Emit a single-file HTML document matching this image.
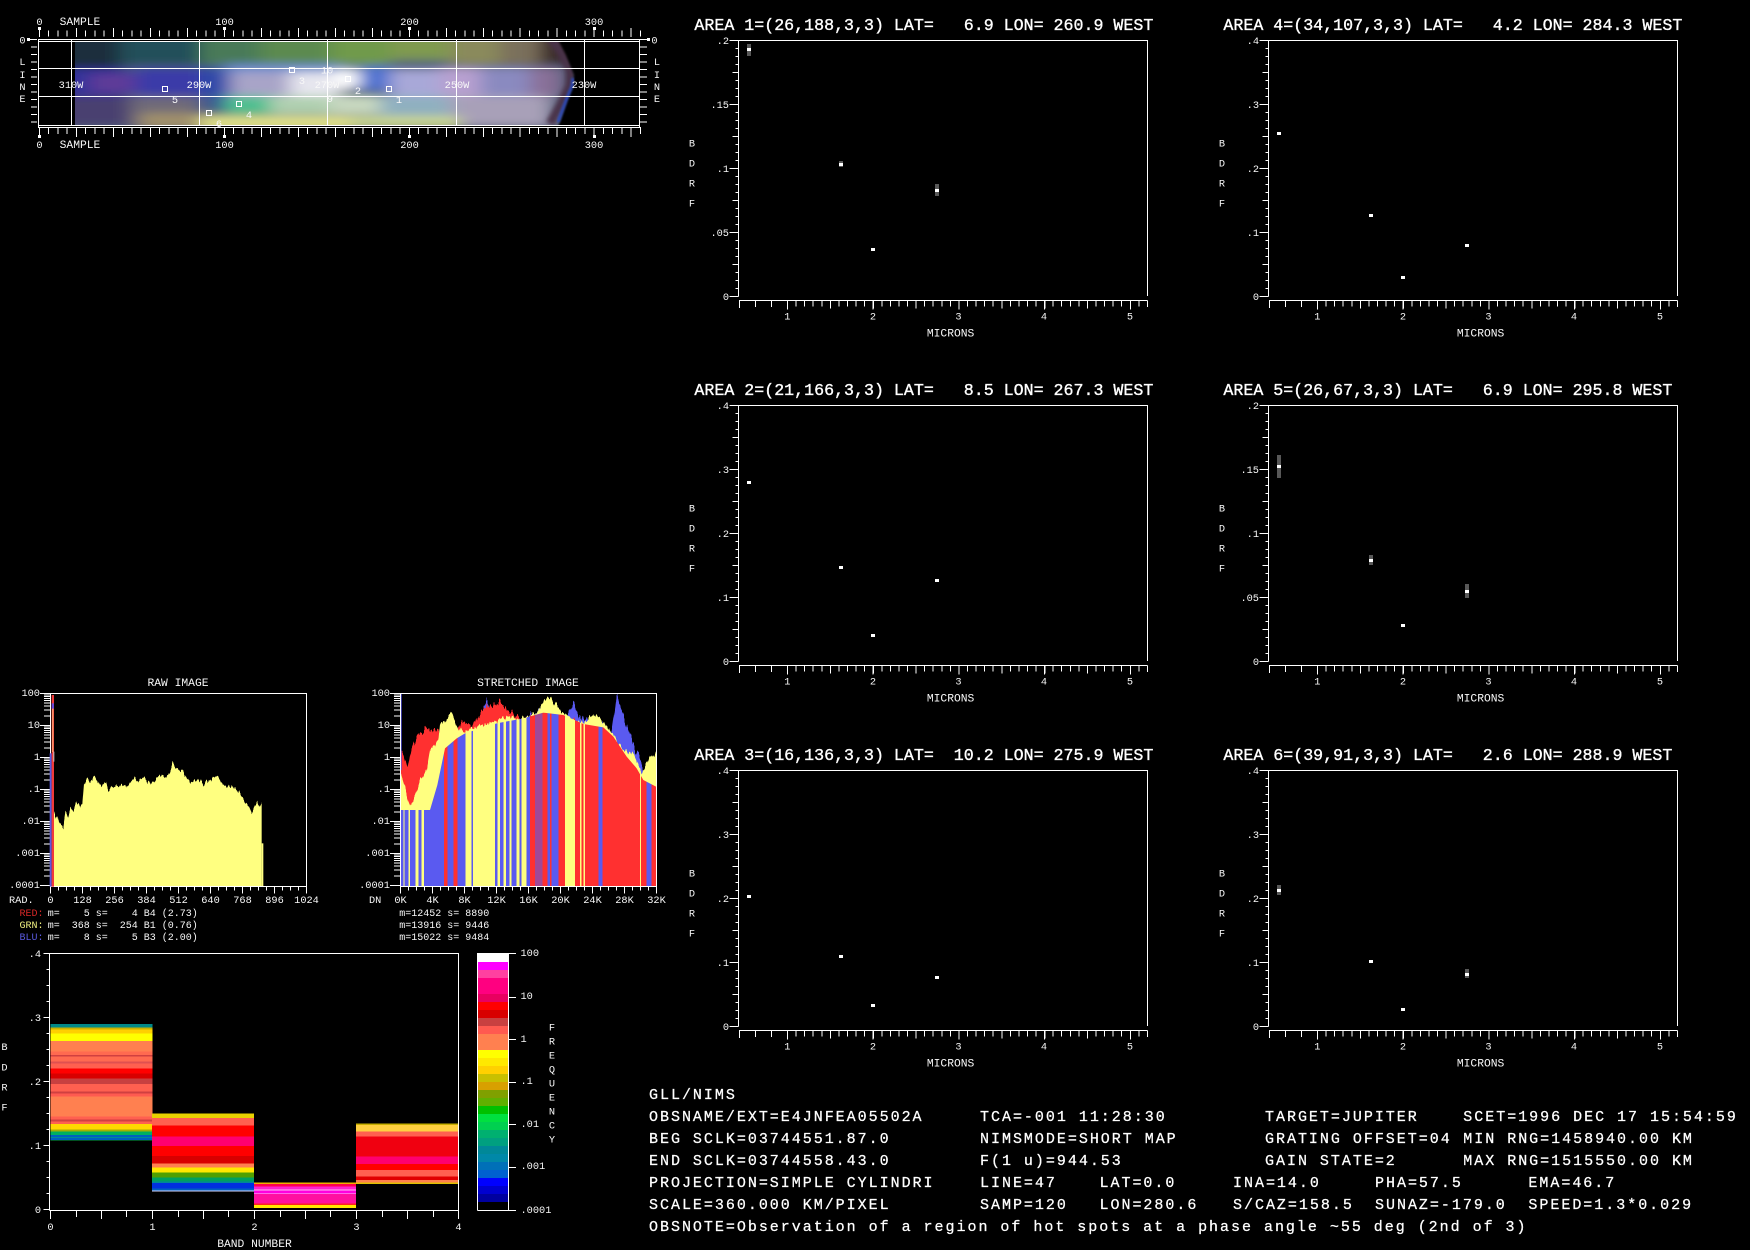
<!DOCTYPE html>
<html><head><meta charset="utf-8"><title>GLL/NIMS</title>
<style>
html,body{margin:0;padding:0;background:#000;width:1750px;height:1250px;overflow:hidden}
svg{display:block}
text{font-family:"Liberation Mono",monospace;fill:#f8f8f8;white-space:pre;transform:translateY(-1px)}
.s{font-size:11.3px}
.t{font-size:10.3px}
.l{font-size:10px}
.h{font-size:16.64px;fill:#fff;stroke:#fff;stroke-width:.35px}
.b{font-size:15px;letter-spacing:1.98px;fill:#fff;stroke:#fff;stroke-width:.25px}
.m{text-anchor:middle}
.e{text-anchor:end}
.w{fill:none;stroke:#fff;stroke-width:1}
.g{fill:#585858}
.p{fill:#fff}
</style></head><body>
<svg xmlns="http://www.w3.org/2000/svg" width="1750" height="1250" viewBox="0 0 1750 1250">
<defs>
<filter id="bl" x="-10%" y="-30%" width="120%" height="160%"><feGaussianBlur stdDeviation="9 4.5"/></filter>
<filter id="bs"><feGaussianBlur stdDeviation="1"/></filter>
<filter id="bm" x="-30%" y="-30%" width="160%" height="160%"><feGaussianBlur stdDeviation="2.5"/></filter>
<filter id="jag" x="-5%" y="-10%" width="110%" height="120%" color-interpolation-filters="sRGB">
<feTurbulence type="fractalNoise" baseFrequency="0.13 0.0005" numOctaves="2" seed="3" result="n"/>
<feColorMatrix in="n" type="matrix" values="0 0 0 0 .5  0 1 0 0 0  0 0 0 0 0  0 0 0 0 1" result="c"/>
<feDisplacementMap in="SourceGraphic" in2="c" scale="60" xChannelSelector="R" yChannelSelector="G"/>
</filter>
<filter id="jag2" x="-5%" y="-10%" width="110%" height="120%" color-interpolation-filters="sRGB">
<feTurbulence type="fractalNoise" baseFrequency="0.13 0.0005" numOctaves="2" seed="8" result="n"/>
<feColorMatrix in="n" type="matrix" values="0 0 0 0 .5  0 1 0 0 0  0 0 0 0 0  0 0 0 0 1" result="c"/>
<feDisplacementMap in="SourceGraphic" in2="c" scale="35" xChannelSelector="R" yChannelSelector="G"/>
</filter>
<clipPath id="imgc"><rect x="75" y="41" width="564" height="84"/></clipPath>
<clipPath id="hbox"><rect x="150" y="72" width="768" height="576"/></clipPath>
<g id="pax" shape-rendering="crispEdges">
<path class="w" d="M738.5 296.5V40.5H1147.5V296"/>
<path class="w" d="M739 300.5H1147.5"/>
<line x1="737" y1="40" x2="737" y2="297" stroke="#fff" stroke-width="3" stroke-dasharray="1 7"/>
<line x1="735.5" y1="40" x2="735.5" y2="297" stroke="#fff" stroke-width="6" stroke-dasharray="1 31"/>
<line x1="734" y1="40" x2="734" y2="297" stroke="#fff" stroke-width="9" stroke-dasharray="1 63"/>
<line x1="787" y1="303.5" x2="1148" y2="303.5" stroke="#fff" stroke-width="6" stroke-dasharray="1 7.57"/>
<line x1="787" y1="305" x2="1148" y2="305" stroke="#fff" stroke-width="9" stroke-dasharray="1 84.7"/>
<line x1="830" y1="304.5" x2="1148" y2="304.5" stroke="#fff" stroke-width="8" stroke-dasharray="1 41.85"/>
<path class="w" d="M739.5 301V308M755.5 301V307M771.5 301V307M1147.5 301V307"/>
</g>
<path id="dec" d="M40 0H50M44 -9.6H50M44 -15.3H50M44 -19.3H50M44 -22.4H50M44 -24.9H50M44 -27H50M44 -28.9H50M44 -30.5H50" class="w"/>
<g id="hax" shape-rendering="crispEdges">
<path class="w" d="M50.5 886.5V693.5H306.5V886.5H50.5"/>
<path class="w" d="M40 693.5H50"/>
<use href="#dec" x="0" y="725.5"/><use href="#dec" x="0" y="757.5"/>
<use href="#dec" x="0" y="789.5"/><use href="#dec" x="0" y="821.5"/><use href="#dec" x="0" y="853.5"/><use href="#dec" x="0" y="885.5"/>
<line x1="50" y1="888.5" x2="307" y2="888.5" stroke="#fff" stroke-width="4" stroke-dasharray="1 7"/>
<line x1="50" y1="890" x2="307" y2="890" stroke="#fff" stroke-width="7" stroke-dasharray="1 31"/>
</g>
<clipPath id="floor"><polygon points="150,420 240,420 262,345 285,235 320,205 345,190 400,172 440,160 520,145 580,128 640,135 700,162 760,172 790,200 830,260 860,295 880,330 918,350 918,650 150,650"/></clipPath>
</defs>
<rect width="1750" height="1250" fill="#000"/>

<!-- Top image -->
<g clip-path="url(#imgc)">
<g filter="url(#bl)">
<rect x="40" y="20" width="540" height="120" fill="#50607a"/>
<rect x="40" y="25" width="83" height="43" fill="#1b2d3c"/>
<rect x="120" y="25" width="80" height="40" fill="#24505a"/>
<rect x="200" y="25" width="60" height="40" fill="#4a7a58"/>
<rect x="260" y="25" width="70" height="40" fill="#5c8a50"/>
<rect x="330" y="25" width="60" height="40" fill="#6f9a4c"/>
<rect x="390" y="25" width="60" height="35" fill="#7f9a50"/>
<rect x="450" y="25" width="50" height="40" fill="#8a8a5c"/>
<rect x="500" y="25" width="40" height="40" fill="#7a6f5c"/>
<rect x="540" y="25" width="40" height="40" fill="#3a2c2c"/>
<rect x="40" y="68" width="88" height="28" fill="#33309a"/>
<rect x="90" y="74" width="45" height="18" fill="#5e3a98"/>
<rect x="135" y="68" width="65" height="28" fill="#3a3aa8"/>
<rect x="200" y="68" width="30" height="28" fill="#2f4aa8"/>
<rect x="225" y="64" width="120" height="8" fill="#6a8ad0"/>
<rect x="230" y="72" width="60" height="24" fill="#a8a4c8"/>
<rect x="290" y="72" width="50" height="24" fill="#e6e6ee"/>
<rect x="335" y="70" width="24" height="18" fill="#ffffff"/>
<rect x="360" y="66" width="30" height="24" fill="#4a6fd0"/>
<rect x="390" y="70" width="50" height="26" fill="#a8a8d8"/>
<rect x="440" y="68" width="40" height="28" fill="#b8a0d0"/>
<rect x="480" y="68" width="50" height="28" fill="#8a8ac0"/>
<rect x="530" y="68" width="30" height="28" fill="#8a7098"/>
<rect x="40" y="96" width="90" height="30" fill="#4a3f70"/>
<rect x="130" y="96" width="70" height="30" fill="#6f6a78"/>
<rect x="200" y="96" width="25" height="14" fill="#3a5a90"/>
<rect x="225" y="96" width="45" height="18" fill="#50c090"/>
<rect x="270" y="96" width="60" height="18" fill="#b0d0b0"/>
<rect x="330" y="96" width="50" height="18" fill="#c8d8c0"/>
<rect x="380" y="96" width="70" height="30" fill="#8fb0c0"/>
<rect x="450" y="96" width="100" height="30" fill="#a8a0b8"/>
<rect x="140" y="113" width="60" height="16" fill="#a0906a"/>
<rect x="200" y="116" width="150" height="14" fill="#e0e088"/>
<rect x="350" y="116" width="110" height="12" fill="#c8d490"/>
</g>
<path d="M545 30L560 50L570 70L570 85L562 102L550 124" fill="none" stroke="#4a3048" stroke-width="9" filter="url(#bm)"/>
<path d="M553 30L566 55L574 75L573 85L568 97L557 130H640V30Z" fill="#000" filter="url(#bs)"/>
<path d="M573 78L572 86L567 98L558 122" fill="none" stroke="#2a4ab8" stroke-width="3" filter="url(#bs)"/>
</g>

<g shape-rendering="crispEdges">
<path class="w" d="M38.5 39.5H639.5V127.5H38.5Z"/>
<path class="w" d="M38.5 41.5H639.5M38.5 125.5H639.5"/>
<path class="w" d="M71.5 40V126M199.5 40V126M327.5 40V126M456.5 40V126M584.5 40V126M39 68.5H639M39 96.5H639"/>
<line x1="39" y1="33.5" x2="641" y2="33.5" stroke="#fff" stroke-width="6" stroke-dasharray="1 8.245"/>
<line x1="39" y1="32.5" x2="641" y2="32.5" stroke="#fff" stroke-width="9" stroke-dasharray="1 35.98"/>
<line x1="39" y1="130.5" x2="641" y2="130.5" stroke="#fff" stroke-width="7" stroke-dasharray="1 8.245"/>
<line x1="39" y1="132" x2="641" y2="132" stroke="#fff" stroke-width="10" stroke-dasharray="1 35.98"/>
<line x1="34" y1="39" x2="34" y2="126" stroke="#fff" stroke-width="6" stroke-dasharray="1 6.5"/>
<line x1="643.5" y1="39" x2="643.5" y2="126" stroke="#fff" stroke-width="7" stroke-dasharray="1 6.5"/>
<path fill="#fff" d="M38 27h3v3h-3zM223 27h3v3h-3zM408 27h3v3h-3zM593 27h3v3h-3zM38 135h3v3h-3zM223 135h3v3h-3zM408 135h3v3h-3zM593 135h3v3h-3zM27 38h3v3h-3zM647 38h3v3h-3z"/>
<path class="w" d="M30 39.5H37M640 39.5H647"/>
<path class="w" d="M386.5 86.5h5v5h-5zM345.5 76.5h5v5h-5zM289.5 67.5h5v5h-5zM236.5 101.5h5v5h-5zM162.5 86.5h5v5h-5zM206.5 110.5h5v5h-5z"/>
</g>

<text class="t m" x="39.5" y="26">0</text><text class="s m" x="80" y="26">SAMPLE</text>
<text class="t m" x="224.5" y="26">100</text><text class="t m" x="409.5" y="26">200</text><text class="t m" x="594" y="26">300</text>
<text class="t m" x="39.5" y="149">0</text><text class="s m" x="80" y="149">SAMPLE</text>
<text class="t m" x="224.5" y="149">100</text><text class="t m" x="409.5" y="149">200</text><text class="t m" x="594" y="149">300</text>
<text class="t m" x="22.5" y="44.5">0</text><text class="t m" x="22.5" y="66">L</text><text class="t m" x="22.5" y="79">I</text><text class="t m" x="22.5" y="91">N</text><text class="t m" x="22.5" y="103">E</text>
<text class="t m" x="654.5" y="44.5">0</text><text class="t m" x="657" y="66">L</text><text class="t m" x="657" y="79">I</text><text class="t m" x="657" y="91">N</text><text class="t m" x="657" y="103">E</text>
<text class="t m" x="71" y="89">310W</text><text class="t m" x="199" y="89">290W</text><text class="t m" x="327" y="89">270W</text><text class="t m" x="457" y="89">250W</text><text class="t m" x="584" y="89">230W</text>
<text class="t m" x="327" y="74.5">10</text><text class="t m" x="175" y="104">5</text><text class="t m" x="249" y="119">4</text><text class="t m" x="219" y="128">6</text><text class="t m" x="302" y="85">3</text><text class="t m" x="358" y="95">2</text><text class="t m" x="399" y="104">1</text><text class="t m" x="330" y="103">9</text>

<!-- Raw histogram -->
<use href="#hax"/>
<g transform="translate(0,670) scale(.33333)">
<g clip-path="url(#hbox)">
<path filter="url(#jag2)" fill="#ffff80" d="M160 700V430L165 428V450L172 428L178 460L185 465L190 472L197 425L205 440L212 415L220 420L230 395L240 408L247 402L252 342L262 325L270 335L285 315L298 345L305 350L318 335L325 358L335 350L347 345L360 352L372 342L385 352L402 320L415 335L432 320L445 335L452 345L465 330L480 318L495 325L505 315L518 283L530 295L545 300L558 320L572 340L590 325L602 338L618 342L640 322L655 322L668 345L690 350L705 355L730 385L745 405L755 428L772 392L778 412L785 398V700Z"/>
<rect x="785" y="520" width="5" height="130" fill="#ffff80"/>
</g>
<rect x="149" y="250" width="6" height="400" fill="#5a5ae0"/>
<rect x="155" y="75" width="7" height="575" fill="#f03a3a"/>
<rect x="155" y="100" width="7" height="16" fill="#6a4ad8"/>
<rect x="157" y="116" width="3" height="130" fill="#ffc080"/>
<rect x="160" y="245" width="3" height="30" fill="#c8c8c8"/>
</g>
<text class="s m" x="178" y="687">RAW IMAGE</text>
<text class="t e" x="40" y="697">100</text><text class="t e" x="40" y="729">10</text><text class="t e" x="40" y="761">1</text><text class="t e" x="40" y="793">.1</text><text class="t e" x="40" y="825">.01</text><text class="t e" x="40" y="857">.001</text><text class="t e" x="40" y="889">.0001</text>
<text class="t" x="9" y="904">RAD.</text>
<text class="t m" x="50.5" y="904">0</text><text class="t m" x="82.5" y="904">128</text><text class="t m" x="114.5" y="904">256</text><text class="t m" x="146.5" y="904">384</text><text class="t m" x="178.5" y="904">512</text><text class="t m" x="210.5" y="904">640</text><text class="t m" x="242.5" y="904">768</text><text class="t m" x="274.5" y="904">896</text><text class="t m" x="306.5" y="904">1024</text>
<text class="l" x="19.5" y="917" style="fill:#d82828">RED:</text><text class="l" x="47.7" y="917">m=    5 s=    4 B4 (2.73)</text>
<text class="l" x="19.5" y="929" style="fill:#f0f080">GRN:</text><text class="l" x="47.7" y="929">m=  368 s=  254 B1 (0.76)</text>
<text class="l" x="19.5" y="941" style="fill:#5a5ae0">BLU:</text><text class="l" x="47.7" y="941">m=    8 s=    5 B3 (2.00)</text>

<!-- Stretched histogram -->
<g transform="translate(350,670) scale(.33333)">
<g clip-path="url(#hbox)">
<polygon filter="url(#jag)" fill="#5a5af0" points="150,700 150,300 165,400 200,400 240,385 262,345 280,240 320,190 345,185 380,165 410,95 430,130 470,140 510,160 540,140 580,115 620,125 650,140 670,100 685,140 720,150 760,170 785,185 800,78 825,150 850,220 880,290 905,330 918,400 930,700"/>
<polygon filter="url(#jag)" fill="#ff3030" points="150,700 150,240 160,255 172,300 185,235 205,195 225,180 245,175 265,180 285,230 300,210 320,180 345,155 370,165 395,125 420,105 450,100 480,125 510,145 540,150 580,130 600,125 640,145 670,155 700,170 740,170 770,190 800,230 830,270 860,295 880,330 930,350 930,700"/>
<polygon filter="url(#jag2)" fill="#ffff80" points="150,700 150,300 165,350 180,410 195,380 210,330 230,300 240,240 265,210 270,160 285,155 305,125 320,170 345,185 380,170 400,165 430,155 470,140 510,150 530,140 560,130 590,78 610,95 640,130 670,150 700,160 735,130 760,155 790,195 820,240 850,250 875,310 900,260 930,245 930,700"/>
<polygon filter="url(#jag2)" fill="#ff3030" points="840,700 840,280 870,330 930,420 930,700"/>
<g clip-path="url(#floor)" shape-rendering="crispEdges">
<rect x="150" y="70" width="10" height="580" fill="#5a5af0"/><rect x="160" y="70" width="3" height="580" fill="#ffff80"/><rect x="163" y="70" width="12" height="580" fill="#5a5af0"/><rect x="175" y="70" width="5" height="580" fill="#ffff80"/><rect x="180" y="70" width="17" height="580" fill="#5a5af0"/><rect x="197" y="70" width="8" height="580" fill="#ffff80"/><rect x="205" y="70" width="10" height="580" fill="#5a5af0"/><rect x="215" y="70" width="7" height="580" fill="#ffff80"/><rect x="222" y="70" width="60" height="580" fill="#5a5af0"/><rect x="282" y="70" width="10" height="580" fill="#ff3030"/><rect x="292" y="70" width="18" height="580" fill="#5a5af0"/><rect x="310" y="70" width="12" height="580" fill="#ff3030"/><rect x="322" y="70" width="25" height="580" fill="#5a5af0"/><rect x="347" y="70" width="18" height="580" fill="#ffff80"/><rect x="365" y="70" width="4" height="580" fill="#5a5af0"/><rect x="369" y="70" width="66" height="580" fill="#ffff80"/><rect x="435" y="70" width="8" height="580" fill="#5a5af0"/><rect x="443" y="70" width="7" height="580" fill="#ffff80"/><rect x="450" y="70" width="10" height="580" fill="#5a5af0"/><rect x="460" y="70" width="8" height="580" fill="#ffff80"/><rect x="468" y="70" width="10" height="580" fill="#5a5af0"/><rect x="478" y="70" width="7" height="580" fill="#ffff80"/><rect x="485" y="70" width="15" height="580" fill="#5a5af0"/><rect x="500" y="70" width="8" height="580" fill="#ffff80"/><rect x="508" y="70" width="7" height="580" fill="#5a5af0"/><rect x="515" y="70" width="15" height="580" fill="#ffff80"/><rect x="530" y="70" width="10" height="580" fill="#5a5af0"/><rect x="540" y="70" width="15" height="580" fill="#ff3030"/><rect x="555" y="70" width="23" height="580" fill="#a04898"/><rect x="578" y="70" width="14" height="580" fill="#ff3030"/><rect x="592" y="70" width="8" height="580" fill="#5a5af0"/><rect x="600" y="70" width="5" height="580" fill="#ff3030"/><rect x="605" y="70" width="20" height="580" fill="#5a5af0"/><rect x="625" y="70" width="20" height="580" fill="#ff3030"/><rect x="645" y="70" width="30" height="580" fill="#ffff80"/><rect x="675" y="70" width="15" height="580" fill="#ff3030"/><rect x="690" y="70" width="5" height="580" fill="#ffff80"/><rect x="695" y="70" width="5" height="580" fill="#ff3030"/><rect x="700" y="70" width="5" height="580" fill="#ffff80"/><rect x="705" y="70" width="40" height="580" fill="#ff3030"/><rect x="745" y="70" width="12" height="580" fill="#5a5af0"/><rect x="757" y="70" width="113" height="580" fill="#ff3030"/><rect x="870" y="70" width="3" height="580" fill="#ffff80"/><rect x="873" y="70" width="17" height="580" fill="#ff3030"/><rect x="890" y="70" width="15" height="580" fill="#5a5af0"/><rect x="905" y="70" width="13" height="580" fill="#ff3030"/>
</g>
</g>
<rect x="150" y="70" width="5" height="230" fill="#5a5af0"/>
</g>
<use href="#hax" x="350"/>
<text class="s m" x="528" y="687">STRETCHED IMAGE</text>
<text class="t e" x="390" y="697">100</text><text class="t e" x="390" y="729">10</text><text class="t e" x="390" y="761">1</text><text class="t e" x="390" y="793">.1</text><text class="t e" x="390" y="825">.01</text><text class="t e" x="390" y="857">.001</text><text class="t e" x="390" y="889">.0001</text>
<text class="t" x="369" y="904">DN</text>
<text class="t m" x="400.5" y="904">0K</text><text class="t m" x="432.5" y="904">4K</text><text class="t m" x="464.5" y="904">8K</text><text class="t m" x="496.5" y="904">12K</text><text class="t m" x="528.5" y="904">16K</text><text class="t m" x="560.5" y="904">20K</text><text class="t m" x="592.5" y="904">24K</text><text class="t m" x="624.5" y="904">28K</text><text class="t m" x="656.5" y="904">32K</text>
<text class="l" x="399.3" y="917">m=12452 s= 8890</text>
<text class="l" x="399.3" y="929">m=13916 s= 9446</text>
<text class="l" x="399.3" y="941">m=15022 s= 9484</text>

<!-- Band chart -->
<g shape-rendering="crispEdges">
<g transform="translate(0,940) scale(1,.33333)">
<g transform="translate(50.5,0)">
<rect y="252" width="102" height="10" fill="#008888"/><rect y="262" width="102" height="6" fill="#c8b000"/><rect y="268" width="102" height="12" fill="#ffd000"/><rect y="280" width="102" height="23" fill="#ffff00"/><rect y="303" width="102" height="32" fill="#ff8050"/><rect y="335" width="102" height="10" fill="#ff6a50"/><rect y="345" width="102" height="5" fill="#d04040"/><rect y="350" width="102" height="15" fill="#ff6a50"/><rect y="365" width="102" height="5" fill="#e05050"/><rect y="370" width="102" height="15" fill="#ff6050"/><rect y="385" width="102" height="15" fill="#ff0000"/><rect y="400" width="102" height="15" fill="#d80000"/><rect y="415" width="102" height="17" fill="#c84040"/><rect y="432" width="102" height="23" fill="#ff6050"/><rect y="455" width="102" height="5" fill="#d04040"/><rect y="460" width="102" height="10" fill="#ff5a50"/><rect y="470" width="102" height="60" fill="#ff8050"/><rect y="530" width="102" height="8" fill="#ff6050"/><rect y="538" width="102" height="6" fill="#d04040"/><rect y="544" width="102" height="8" fill="#ff6050"/><rect y="552" width="102" height="16" fill="#ffd800"/><rect y="568" width="102" height="7" fill="#a8b000"/><rect y="575" width="102" height="10" fill="#00b060"/><rect y="585" width="102" height="6" fill="#0060c0"/><rect y="591" width="102" height="3" fill="#008898"/><rect y="594" width="102" height="6" fill="#0060c0"/><rect y="600" width="102" height="2" fill="#00a040"/>
</g>
<g transform="translate(152,0)">
<rect y="520" width="102" height="14" fill="#e8d000"/><rect y="534" width="102" height="22" fill="#ff6050"/><rect y="556" width="102" height="34" fill="#ff0000"/><rect y="590" width="102" height="28" fill="#ff0070"/><rect y="618" width="102" height="30" fill="#ff0000"/><rect y="648" width="102" height="22" fill="#d80000"/><rect y="670" width="102" height="13" fill="#ff8050"/><rect y="683" width="102" height="14" fill="#ffe800"/><rect y="697" width="102" height="15" fill="#50a000"/><rect y="712" width="102" height="13" fill="#00a060"/><rect y="725" width="102" height="4" fill="#008898"/><rect y="729" width="102" height="16" fill="#0030e0"/><rect y="745" width="102" height="7" fill="#0060c0"/><rect y="752" width="102" height="3" fill="#d8d8ff"/>
</g>
<g transform="translate(254,0)">
<rect y="727" width="102" height="5" fill="#f0b000"/><rect y="732" width="102" height="8" fill="#ff0050"/><rect y="740" width="102" height="8" fill="#ff20d0"/><rect y="748" width="102" height="4" fill="#ffc0f0"/><rect y="752" width="102" height="8" fill="#ff00e0"/><rect y="760" width="102" height="2" fill="#ffd0f0"/><rect y="762" width="102" height="28" fill="#ff10a0"/><rect y="790" width="102" height="5" fill="#ff2020"/><rect y="795" width="102" height="9" fill="#ffe800"/>
</g>
<g transform="translate(356,0)">
<rect y="550" width="102" height="5" fill="#c8b000"/><rect y="555" width="102" height="20" fill="#ffd040"/><rect y="575" width="102" height="15" fill="#ff6050"/><rect y="590" width="102" height="60" fill="#f00010"/><rect y="650" width="102" height="22" fill="#ff0070"/><rect y="672" width="102" height="18" fill="#ff0000"/><rect y="690" width="102" height="20" fill="#ff6050"/><rect y="710" width="102" height="10" fill="#e00000"/><rect y="720" width="102" height="8" fill="#ff8050"/><rect y="728" width="102" height="4" fill="#e0c000"/>
</g>
<!-- colour bar -->
<g transform="translate(478,0)">
<rect y="40" width="31" height="26" fill="#fff"/><rect y="66" width="31" height="24" fill="#ff00ff"/><rect y="90" width="31" height="24" fill="#ff40a0"/><rect y="114" width="31" height="48" fill="#ff0080"/><rect y="162" width="31" height="24" fill="#e80060"/><rect y="186" width="31" height="24" fill="#ff0000"/><rect y="210" width="31" height="24" fill="#d80000"/><rect y="234" width="31" height="24" fill="#c84040"/><rect y="258" width="31" height="24" fill="#ff5a50"/><rect y="282" width="31" height="48" fill="#ff8050"/><rect y="330" width="31" height="24" fill="#ffff00"/><rect y="354" width="31" height="24" fill="#ffe800"/><rect y="378" width="31" height="24" fill="#ffd000"/><rect y="402" width="31" height="24" fill="#c8c000"/><rect y="426" width="31" height="24" fill="#d8a000"/><rect y="450" width="31" height="24" fill="#80a000"/><rect y="474" width="31" height="24" fill="#60b000"/><rect y="498" width="31" height="24" fill="#00c000"/><rect y="522" width="31" height="24" fill="#00e040"/><rect y="546" width="31" height="24" fill="#00d050"/><rect y="570" width="31" height="24" fill="#00b070"/><rect y="594" width="31" height="24" fill="#00a080"/><rect y="618" width="31" height="24" fill="#008898"/><rect y="642" width="31" height="24" fill="#0088a8"/><rect y="666" width="31" height="24" fill="#0070b8"/><rect y="690" width="31" height="24" fill="#0060d0"/><rect y="714" width="31" height="24" fill="#0000ff"/><rect y="738" width="31" height="24" fill="#0000d0"/><rect y="762" width="31" height="24" fill="#0000a0"/>
</g>
</g>
<path class="w" d="M49.5 1210.5V953.5H458.5V1210.5H49.5"/>
<line x1="48" y1="953" x2="48" y2="1211" stroke="#fff" stroke-width="3" stroke-dasharray="1 15"/>
<line x1="46.5" y1="953" x2="46.5" y2="1211" stroke="#fff" stroke-width="6" stroke-dasharray="1 63"/>
<path class="w" d="M50.5 1211V1219M152.5 1211V1219M254.5 1211V1219M356.5 1211V1219M458.5 1211V1219M101.5 1211V1219M203.5 1211V1219M305.5 1211V1219M407.5 1211V1219M76.5 1211V1217M126.5 1211V1217M178.5 1211V1217M228.5 1211V1217M280.5 1211V1217M330.5 1211V1217M382.5 1211V1217M433.5 1211V1217"/>
<path class="w" d="M477.5 1210.5V953.5H508.5V1210.5H477.5"/>
<path class="w" d="M509 953.5H516M509 997.5H516M509 1039.5H516M509 1082.5H516M509 1124.5H516M509 1167.5H516M509 1210.5H516"/>
</g>
<text class="t e" x="41" y="958">.4</text><text class="t e" x="41" y="1022">.3</text><text class="t e" x="41" y="1086">.2</text><text class="t e" x="41" y="1150">.1</text><text class="t e" x="41" y="1214">0</text>
<text class="t m" x="4.5" y="1051">B</text><text class="t m" x="4.5" y="1071.5">D</text><text class="t m" x="4.5" y="1091.5">R</text><text class="t m" x="4.5" y="1111.5">F</text>
<text class="t m" x="50.5" y="1231">0</text><text class="t m" x="152.5" y="1231">1</text><text class="t m" x="254.5" y="1231">2</text><text class="t m" x="356.5" y="1231">3</text><text class="t m" x="458.5" y="1231">4</text>
<text class="s m" x="254.5" y="1248">BAND NUMBER</text>
<text class="t" x="520.5" y="957">100</text><text class="t" x="520.5" y="1000">10</text><text class="t" x="520.5" y="1043">1</text><text class="t" x="520.5" y="1085">.1</text><text class="t" x="520.5" y="1128">.01</text><text class="t" x="520.5" y="1170">.001</text><text class="t" x="520.5" y="1214">.0001</text>
<text class="t m" x="552" y="1031.5">F</text><text class="t m" x="552" y="1045.5">R</text><text class="t m" x="552" y="1059.5">E</text><text class="t m" x="552" y="1073.5">Q</text><text class="t m" x="552" y="1087.5">U</text><text class="t m" x="552" y="1101.5">E</text><text class="t m" x="552" y="1115.5">N</text><text class="t m" x="552" y="1129.5">C</text><text class="t m" x="552" y="1143.5">Y</text>

<!-- Panel 1 -->
<g>
<use href="#pax"/>
<text class="h" x="694.4" y="31">AREA 1=(26,188,3,3) LAT=   6.9 LON= 260.9 WEST</text>
<text class="t e" x="729" y="45">.2</text><text class="t e" x="729" y="109">.15</text><text class="t e" x="729" y="173">.1</text><text class="t e" x="729" y="237">.05</text><text class="t e" x="729" y="301">0</text>
<text class="t m" x="692" y="147.7">B</text><text class="t m" x="692" y="167.7">D</text><text class="t m" x="692" y="187.7">R</text><text class="t m" x="692" y="207.7">F</text>
<text class="t m" x="787.4" y="320.7">1</text><text class="t m" x="873" y="320.7">2</text><text class="t m" x="958.5" y="320.7">3</text><text class="t m" x="1044" y="320.7">4</text><text class="t m" x="1130" y="320.7">5</text>
<text class="s m" x="950.6" y="337.7">MICRONS</text>
<g shape-rendering="crispEdges">
<rect class="g" x="747" y="44" width="4" height="12"/><rect class="p" x="747" y="48" width="4" height="3"/>
<rect class="g" x="839" y="161" width="4" height="6"/><rect class="p" x="839" y="163" width="4" height="3"/>
<rect class="p" x="871" y="248" width="4" height="3"/>
<rect class="g" x="935" y="184" width="4" height="12"/><rect class="p" x="935" y="189" width="4" height="3"/>
</g>
</g>

<!-- Panel 2 -->
<g transform="translate(0,365)">
<use href="#pax"/>
<text class="h" x="694.4" y="31">AREA 2=(21,166,3,3) LAT=   8.5 LON= 267.3 WEST</text>
<text class="t e" x="729" y="45">.4</text><text class="t e" x="729" y="109">.3</text><text class="t e" x="729" y="173">.2</text><text class="t e" x="729" y="237">.1</text><text class="t e" x="729" y="301">0</text>
<text class="t m" x="692" y="147.7">B</text><text class="t m" x="692" y="167.7">D</text><text class="t m" x="692" y="187.7">R</text><text class="t m" x="692" y="207.7">F</text>
<text class="t m" x="787.4" y="320.7">1</text><text class="t m" x="873" y="320.7">2</text><text class="t m" x="958.5" y="320.7">3</text><text class="t m" x="1044" y="320.7">4</text><text class="t m" x="1130" y="320.7">5</text>
<text class="s m" x="950.6" y="337.7">MICRONS</text>
<g shape-rendering="crispEdges">
<rect class="p" x="747" y="116" width="4" height="3"/>
<rect class="p" x="839" y="201" width="4" height="3"/>
<rect class="p" x="871" y="269" width="4" height="3"/>
<rect class="p" x="935" y="214" width="4" height="3"/>
</g>
</g>

<!-- Panel 3 -->
<g transform="translate(0,730)">
<use href="#pax"/>
<text class="h" x="694.4" y="31">AREA 3=(16,136,3,3) LAT=  10.2 LON= 275.9 WEST</text>
<text class="t e" x="729" y="45">.4</text><text class="t e" x="729" y="109">.3</text><text class="t e" x="729" y="173">.2</text><text class="t e" x="729" y="237">.1</text><text class="t e" x="729" y="301">0</text>
<text class="t m" x="692" y="147.7">B</text><text class="t m" x="692" y="167.7">D</text><text class="t m" x="692" y="187.7">R</text><text class="t m" x="692" y="207.7">F</text>
<text class="t m" x="787.4" y="320.7">1</text><text class="t m" x="873" y="320.7">2</text><text class="t m" x="958.5" y="320.7">3</text><text class="t m" x="1044" y="320.7">4</text><text class="t m" x="1130" y="320.7">5</text>
<text class="s m" x="950.6" y="337.7">MICRONS</text>
<g shape-rendering="crispEdges">
<rect class="p" x="747" y="165" width="4" height="3"/>
<rect class="p" x="839" y="225" width="4" height="3"/>
<rect class="p" x="871" y="274" width="4" height="3"/>
<rect class="p" x="935" y="246" width="4" height="3"/>
</g>
</g>

<!-- Panel 4 -->
<g transform="translate(530,0)">
<use href="#pax"/>
<text class="h" x="693.4" y="31">AREA 4=(34,107,3,3) LAT=   4.2 LON= 284.3 WEST</text>
<text class="t e" x="729" y="45">.4</text><text class="t e" x="729" y="109">.3</text><text class="t e" x="729" y="173">.2</text><text class="t e" x="729" y="237">.1</text><text class="t e" x="729" y="301">0</text>
<text class="t m" x="692" y="147.7">B</text><text class="t m" x="692" y="167.7">D</text><text class="t m" x="692" y="187.7">R</text><text class="t m" x="692" y="207.7">F</text>
<text class="t m" x="787.4" y="320.7">1</text><text class="t m" x="873" y="320.7">2</text><text class="t m" x="958.5" y="320.7">3</text><text class="t m" x="1044" y="320.7">4</text><text class="t m" x="1130" y="320.7">5</text>
<text class="s m" x="950.6" y="337.7">MICRONS</text>
<g shape-rendering="crispEdges">
<rect class="p" x="747" y="132" width="4" height="3"/>
<rect class="p" x="839" y="214" width="4" height="3"/>
<rect class="p" x="871" y="276" width="4" height="3"/>
<rect class="p" x="935" y="244" width="4" height="3"/>
</g>
</g>

<!-- Panel 5 -->
<g transform="translate(530,365)">
<use href="#pax"/>
<text class="h" x="693.4" y="31">AREA 5=(26,67,3,3) LAT=   6.9 LON= 295.8 WEST</text>
<text class="t e" x="729" y="45">.2</text><text class="t e" x="729" y="109">.15</text><text class="t e" x="729" y="173">.1</text><text class="t e" x="729" y="237">.05</text><text class="t e" x="729" y="301">0</text>
<text class="t m" x="692" y="147.7">B</text><text class="t m" x="692" y="167.7">D</text><text class="t m" x="692" y="187.7">R</text><text class="t m" x="692" y="207.7">F</text>
<text class="t m" x="787.4" y="320.7">1</text><text class="t m" x="873" y="320.7">2</text><text class="t m" x="958.5" y="320.7">3</text><text class="t m" x="1044" y="320.7">4</text><text class="t m" x="1130" y="320.7">5</text>
<text class="s m" x="950.6" y="337.7">MICRONS</text>
<g shape-rendering="crispEdges">
<rect class="g" x="747" y="90" width="4" height="23"/><rect class="p" x="747" y="100" width="4" height="3"/>
<rect class="g" x="839" y="190" width="4" height="10"/><rect class="p" x="839" y="194" width="4" height="3"/>
<rect class="p" x="871" y="259" width="4" height="3"/>
<rect class="g" x="935" y="219" width="4" height="14"/><rect class="p" x="935" y="225" width="4" height="3"/>
</g>
</g>

<!-- Panel 6 -->
<g transform="translate(530,730)">
<use href="#pax"/>
<text class="h" x="693.4" y="31">AREA 6=(39,91,3,3) LAT=   2.6 LON= 288.9 WEST</text>
<text class="t e" x="729" y="45">.4</text><text class="t e" x="729" y="109">.3</text><text class="t e" x="729" y="173">.2</text><text class="t e" x="729" y="237">.1</text><text class="t e" x="729" y="301">0</text>
<text class="t m" x="692" y="147.7">B</text><text class="t m" x="692" y="167.7">D</text><text class="t m" x="692" y="187.7">R</text><text class="t m" x="692" y="207.7">F</text>
<text class="t m" x="787.4" y="320.7">1</text><text class="t m" x="873" y="320.7">2</text><text class="t m" x="958.5" y="320.7">3</text><text class="t m" x="1044" y="320.7">4</text><text class="t m" x="1130" y="320.7">5</text>
<text class="s m" x="950.6" y="337.7">MICRONS</text>
<g shape-rendering="crispEdges">
<rect class="g" x="747" y="155" width="4" height="10"/><rect class="p" x="747" y="159" width="4" height="3"/>
<rect class="p" x="839" y="230" width="4" height="3"/>
<rect class="p" x="871" y="278" width="4" height="3"/>
<rect class="g" x="935" y="239" width="4" height="9"/><rect class="p" x="935" y="243" width="4" height="3"/>
</g>
</g>

<!-- Bottom text -->
<text class="b" x="649" y="1100">GLL/NIMS</text>
<text class="b" x="649" y="1122">OBSNAME/EXT=E4JNFEA05502A</text><text class="b" x="980" y="1122">TCA=-001 11:28:30</text><text class="b" x="1265" y="1122">TARGET=JUPITER</text><text class="b" x="1463.3" y="1122">SCET=1996 DEC 17 15:54:59</text>
<text class="b" x="649" y="1144">BEG SCLK=03744551.87.0</text><text class="b" x="980" y="1144">NIMSMODE=SHORT MAP</text><text class="b" x="1265" y="1144">GRATING OFFSET=04</text><text class="b" x="1463.3" y="1144">MIN RNG=1458940.00 KM</text>
<text class="b" x="649" y="1166">END SCLK=03744558.43.0</text><text class="b" x="980" y="1166">F(1 u)=944.53</text><text class="b" x="1265" y="1166">GAIN STATE=2</text><text class="b" x="1463.3" y="1166">MAX RNG=1515550.00 KM</text>
<text class="b" x="649" y="1188">PROJECTION=SIMPLE CYLINDRI</text><text class="b" x="980" y="1188">LINE=47</text><text class="b" x="1099.5" y="1188">LAT=0.0</text><text class="b" x="1233" y="1188">INA=14.0</text><text class="b" x="1375" y="1188">PHA=57.5</text><text class="b" x="1528.4" y="1188">EMA=46.7</text>
<text class="b" x="649" y="1210">SCALE=360.000 KM/PIXEL</text><text class="b" x="980" y="1210">SAMP=120</text><text class="b" x="1099.5" y="1210">LON=280.6</text><text class="b" x="1233" y="1210">S/CAZ=158.5</text><text class="b" x="1375" y="1210">SUNAZ=-179.0</text><text class="b" x="1528.4" y="1210">SPEED=1.3*0.029</text>
<text class="b" x="649" y="1232">OBSNOTE=Observation of a region of hot spots at a phase angle ~55 deg (2nd of 3)</text>
</svg>
</body></html>
